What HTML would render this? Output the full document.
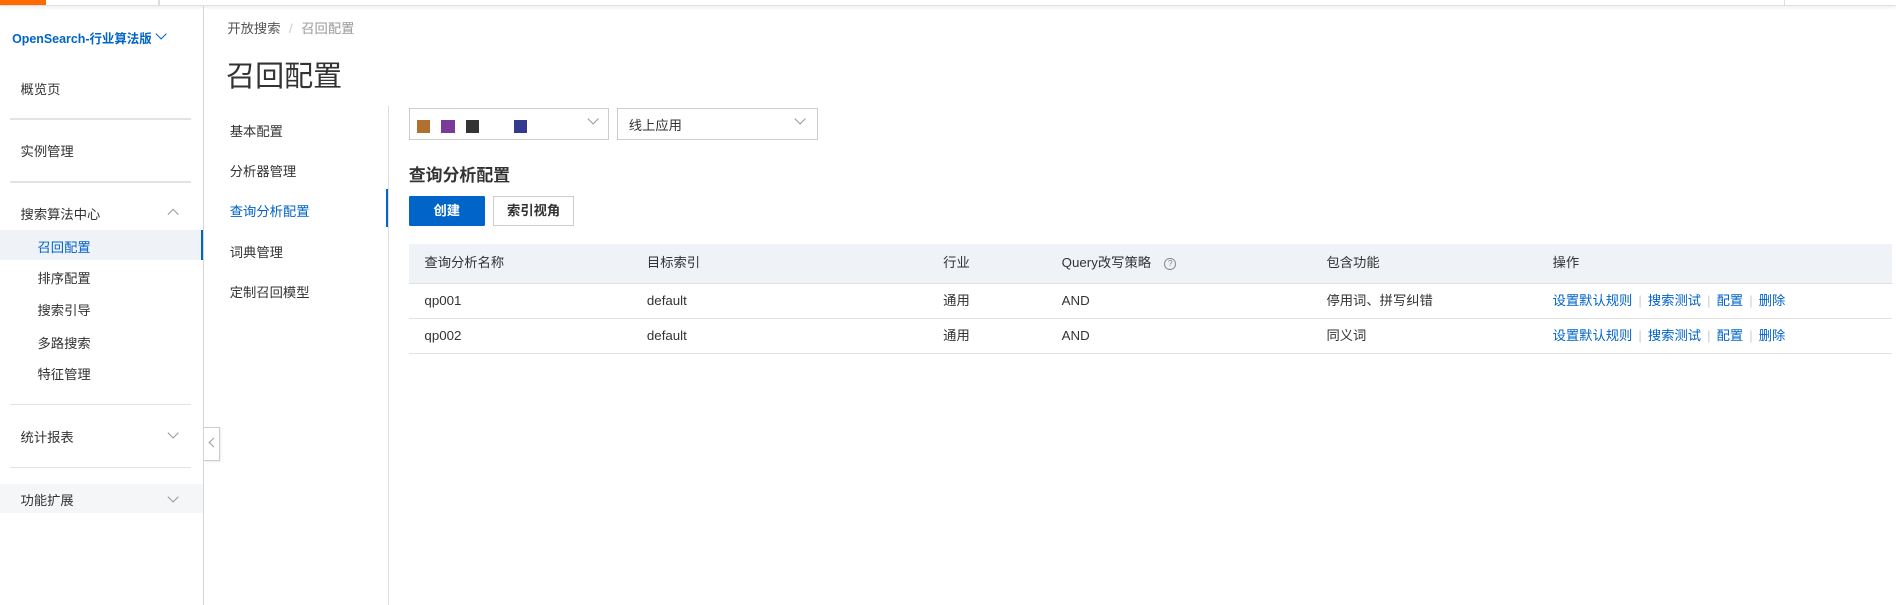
<!DOCTYPE html>
<html><head><meta charset="utf-8"><style>
html,body{margin:0;padding:0;background:#fff;}
body{width:1568px;height:500px;zoom:1.20918;position:relative;overflow:hidden;font-family:"Liberation Sans","Noto Sans CJK SC",sans-serif;color:#333;font-size:11px;}
.a{position:absolute;white-space:nowrap;}
.top{left:0;top:0;width:1568px;height:4px;background:#fff;border-bottom:1px solid #e0e0e0;box-shadow:0 1px 3px rgba(0,0,0,.08);}
.side{left:0;top:5px;width:168px;height:495px;border-right:1px solid #d6d6d6;}
.div{position:absolute;height:1px;background:#e3e3e6;left:8px;width:150px;}
.chev{position:absolute;width:6px;height:6px;border-right:1px solid #999;border-bottom:1px solid #999;}
.th{top:202px;height:32px;line-height:32px;}
.r1{top:234px;height:29px;line-height:29px;}
.r2{top:263px;height:29px;line-height:29px;}
.lk{color:#0064c8;}
.sep{color:#ccc;margin:0 5px;}
</style></head><body>
<div class="a top"></div>
<div class="a" style="left:0;top:0;width:38px;height:4px;background:#ff6a00"></div>
<div class="a" style="left:131px;top:0;width:1px;height:4px;background:#ddd"></div>
<div class="a" style="left:1475px;top:0;width:1px;height:4px;background:#ddd"></div>
<div class="a side"></div>
<div class="a" style="left:10px;top:24px;color:#0064c8;font-weight:bold;font-size:10.3px">OpenSearch-行业算法版</div>
<div class="chev" style="left:130px;top:25px;transform:rotate(45deg);border-color:#0064c8"></div>
<div class="a" style="left:17px;top:65px">概览页</div>
<div class="div" style="top:98px"></div>
<div class="a" style="left:17px;top:117px">实例管理</div>
<div class="div" style="top:150px"></div>
<div class="a" style="left:17px;top:169px">搜索算法中心</div>
<div class="chev" style="left:140px;top:174px;transform:rotate(225deg)"></div>
<div class="a" style="left:0;top:190px;width:166px;height:25px;background:#eff2f7;border-right:2px solid #0064c8"></div>
<div class="a" style="left:31px;top:196px;color:#0064c8">召回配置</div>
<div class="a" style="left:31px;top:222px">排序配置</div>
<div class="a" style="left:31px;top:248px">搜索引导</div>
<div class="a" style="left:31px;top:275px">多路搜索</div>
<div class="a" style="left:31px;top:301px">特征管理</div>
<div class="div" style="top:334px"></div>
<div class="a" style="left:17px;top:353px">统计报表</div>
<div class="chev" style="left:140px;top:355px;transform:rotate(45deg)"></div>
<div class="div" style="top:386px"></div>
<div class="a" style="left:0;top:400px;width:168px;height:24px;background:#f5f6f8"></div>
<div class="a" style="left:17px;top:405px">功能扩展</div>
<div class="chev" style="left:140px;top:408px;transform:rotate(45deg)"></div>
<div class="a" style="left:169px;top:353px;width:12px;height:27px;border:1px solid #ccc;border-left:none;background:#fff;box-shadow:1px 1px 2px rgba(0,0,0,.1)"></div>
<div class="chev" style="left:174px;top:363px;transform:rotate(135deg);width:5px;height:5px"></div>

<div class="a" style="left:188px;top:15px;color:#555">开放搜索 <span style="color:#ccc;margin:0 4px">/</span> <span style="color:#999">召回配置</span></div>
<div class="a" style="left:187px;top:44px;font-size:24px;color:#333">召回配置</div>
<div class="a" style="left:321px;top:88px;width:1px;height:412px;background:#ddd"></div>
<div class="a" style="left:319px;top:156px;width:2px;height:32px;background:#0064c8"></div>
<div class="a" style="left:190px;top:100px">基本配置</div>
<div class="a" style="left:190px;top:133px">分析器管理</div>
<div class="a" style="left:190px;top:166px;color:#0064c8">查询分析配置</div>
<div class="a" style="left:190px;top:200px">词典管理</div>
<div class="a" style="left:190px;top:233px">定制召回模型</div>

<div class="a" style="left:338px;top:89px;width:164px;height:25px;border:1px solid #ccc"></div>
<div class="a" style="left:345px;top:99px;width:11px;height:11px;background:#b07030"></div>
<div class="a" style="left:365px;top:99px;width:11px;height:11px;background:#7a3a9a"></div>
<div class="a" style="left:385px;top:99px;width:11px;height:11px;background:#333"></div>
<div class="a" style="left:425px;top:99px;width:11px;height:11px;background:#333a8f"></div>
<div class="chev" style="left:487px;top:95px;transform:rotate(45deg)"></div>
<div class="a" style="left:510px;top:89px;width:165px;height:25px;border:1px solid #ccc"></div>
<div class="a" style="left:520px;top:95px">线上应用</div>
<div class="chev" style="left:658px;top:95px;transform:rotate(45deg)"></div>

<div class="a" style="left:338px;top:133px;font-size:14px;font-weight:bold;color:#333">查询分析配置</div>
<div class="a" style="left:338px;top:162px;width:63px;height:25px;background:#0064c8;border-radius:1px;color:#fff;font-weight:bold;text-align:center;line-height:25px">创建</div>
<div class="a" style="left:408px;top:162px;width:65px;height:23px;border:1px solid #ccc;text-align:center;line-height:23px;font-weight:bold">索引视角</div>

<div class="a" style="left:338px;top:202px;width:1227px;height:32px;background:#eff2f7;border-bottom:1px solid #e0e0e0"></div>
<div class="a" style="left:338px;top:263px;width:1227px;height:1px;background:#e3e3e3"></div>
<div class="a" style="left:338px;top:292px;width:1227px;height:1px;background:#e3e3e3"></div>
<div class="a th" style="left:351px">查询分析名称</div>
<div class="a th" style="left:535px">目标索引</div>
<div class="a th" style="left:780px">行业</div>
<div class="a th" style="left:878px">Query改写策略 <span style="display:inline-block;width:8px;height:8px;border:1px solid #888;border-radius:50%;font-size:7px;line-height:8px;text-align:center;color:#888;margin-left:8px;vertical-align:middle">?</span></div>
<div class="a th" style="left:1097px">包含功能</div>
<div class="a th" style="left:1284px">操作</div>

<div class="a r1" style="left:351px">qp001</div>
<div class="a r1" style="left:535px">default</div>
<div class="a r1" style="left:780px">通用</div>
<div class="a r1" style="left:878px">AND</div>
<div class="a r1" style="left:1097px">停用词、拼写纠错</div>
<div class="a r1 lk" style="left:1284px">设置默认规则<span class="sep">|</span>搜索测试<span class="sep">|</span>配置<span class="sep">|</span>删除</div>
<div class="a r2" style="left:351px">qp002</div>
<div class="a r2" style="left:535px">default</div>
<div class="a r2" style="left:780px">通用</div>
<div class="a r2" style="left:878px">AND</div>
<div class="a r2" style="left:1097px">同义词</div>
<div class="a r2 lk" style="left:1284px">设置默认规则<span class="sep">|</span>搜索测试<span class="sep">|</span>配置<span class="sep">|</span>删除</div>
</body></html>
